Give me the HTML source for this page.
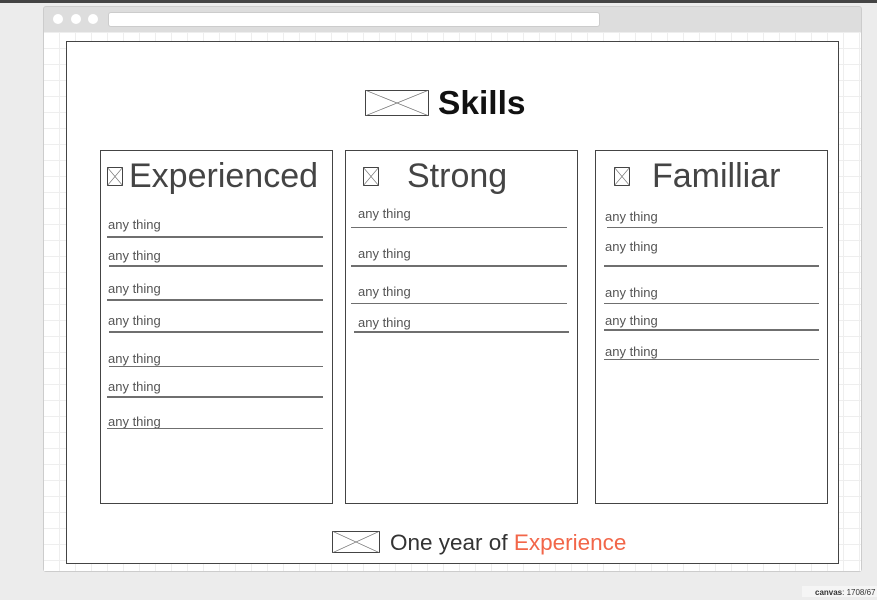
<!DOCTYPE html>
<html><head><style>
*{margin:0;padding:0;box-sizing:border-box}
body{width:877px;height:597px;background:#ececec;position:relative;overflow:hidden;font-family:"Liberation Sans",sans-serif}
.a{position:absolute}
.t{position:absolute;font-size:13px;color:#555;line-height:16px;white-space:nowrap;margin-top:1px}
.l{position:absolute;background:#6f6f6f}
.box{position:absolute;border:1px solid #444;background:#fff}
.h{position:absolute;font-size:34px;color:#444;line-height:40px;white-space:nowrap}
</style></head><body>
<div class="a" style="left:0;top:0;width:877px;height:3px;background:#444"></div>
<div class="a" style="left:43px;top:6px;width:819px;height:566px;background:#ddd;border:1px solid #ccc;border-radius:3px"></div>
<div class="a" style="left:53px;top:14px;width:10px;height:10px;border-radius:50%;background:#fff"></div>
<div class="a" style="left:71px;top:14px;width:10px;height:10px;border-radius:50%;background:#fff"></div>
<div class="a" style="left:88px;top:14px;width:10px;height:10px;border-radius:50%;background:#fff"></div>
<div class="a" style="left:108px;top:12px;width:492px;height:15px;border-radius:3px;background:#fff;border:1px solid #ccc"></div>
<div class="a" style="left:44px;top:32px;width:817px;height:539px;background-color:#fff;background-image:linear-gradient(#eee 1px,transparent 1px),linear-gradient(90deg,#eee 1px,transparent 1px);background-size:16px 16px;background-position:-1px 0"></div>
<div class="box" style="left:66px;top:41px;width:773px;height:523px"></div>
<svg class="a" style="left:365px;top:90px" width="64" height="26"><rect x=".5" y=".5" width="63" height="25" fill="#fff" stroke="#444"/><path d="M0 0L64 26M64 0L0 26" stroke="#666" stroke-width=".6"/></svg>
<div class="a" style="left:438px;top:84px;font-size:33.5px;font-weight:bold;color:#111;line-height:40px">Skills</div>
<div class="box" style="left:100px;top:150px;width:233px;height:354px"></div>
<div class="box" style="left:345px;top:150px;width:233px;height:354px"></div>
<div class="box" style="left:595px;top:150px;width:233px;height:354px"></div>
<svg class="a" style="left:107px;top:167px" width="16" height="19"><rect x=".5" y=".5" width="15" height="18" fill="#fff" stroke="#444"/><path d="M0 0L16 19M16 0L0 19" stroke="#666" stroke-width=".6"/></svg>
<svg class="a" style="left:363px;top:167px" width="16" height="19"><rect x=".5" y=".5" width="15" height="18" fill="#fff" stroke="#444"/><path d="M0 0L16 19M16 0L0 19" stroke="#666" stroke-width=".6"/></svg>
<svg class="a" style="left:614px;top:167px" width="16" height="19"><rect x=".5" y=".5" width="15" height="18" fill="#fff" stroke="#444"/><path d="M0 0L16 19M16 0L0 19" stroke="#666" stroke-width=".6"/></svg>
<div class="h" style="left:129px;top:156px">Experienced</div>
<div class="h" style="left:407px;top:156px">Strong</div>
<div class="h" style="left:652px;top:156px">Familliar</div>

<div class="t" style="left:108px;top:216px">any thing</div><div class="l" style="left:107px;top:236px;width:216px;height:2px"></div>
<div class="t" style="left:108px;top:247px">any thing</div><div class="l" style="left:109px;top:265px;width:214px;height:2px"></div>
<div class="t" style="left:108px;top:280px">any thing</div><div class="l" style="left:107px;top:299px;width:216px;height:2px"></div>
<div class="t" style="left:108px;top:312px">any thing</div><div class="l" style="left:109px;top:331px;width:214px;height:2px"></div>
<div class="t" style="left:108px;top:350px">any thing</div><div class="l" style="left:109px;top:366px;width:214px;height:1px"></div>
<div class="t" style="left:108px;top:378px">any thing</div><div class="l" style="left:107px;top:396px;width:216px;height:2px"></div>
<div class="t" style="left:108px;top:413px">any thing</div><div class="l" style="left:107px;top:428px;width:216px;height:1px"></div>

<div class="t" style="left:358px;top:205px">any thing</div><div class="l" style="left:351px;top:227px;width:216px;height:1px"></div>
<div class="t" style="left:358px;top:245px">any thing</div><div class="l" style="left:351px;top:265px;width:216px;height:2px"></div>
<div class="t" style="left:358px;top:283px">any thing</div><div class="l" style="left:351px;top:303px;width:216px;height:1px"></div>
<div class="t" style="left:358px;top:314px">any thing</div><div class="l" style="left:354px;top:331px;width:215px;height:2px"></div>

<div class="t" style="left:605px;top:208px">any thing</div><div class="l" style="left:607px;top:227px;width:216px;height:1px"></div>
<div class="t" style="left:605px;top:238px">any thing</div><div class="l" style="left:604px;top:265px;width:215px;height:2px"></div>
<div class="t" style="left:605px;top:284px">any thing</div><div class="l" style="left:604px;top:303px;width:215px;height:1px"></div>
<div class="t" style="left:605px;top:312px">any thing</div><div class="l" style="left:604px;top:329px;width:215px;height:2px"></div>
<div class="t" style="left:605px;top:343px">any thing</div><div class="l" style="left:604px;top:359px;width:215px;height:1px"></div>

<svg class="a" style="left:332px;top:531px" width="48" height="22"><rect x=".5" y=".5" width="47" height="21" fill="#fff" stroke="#444"/><path d="M0 0L48 22M48 0L0 22" stroke="#666" stroke-width=".6"/></svg>
<div class="a" style="left:390px;top:530px;font-size:22.5px;color:#333;line-height:25px;white-space:nowrap">One year of <span style="color:#f26649">Experience</span></div>
<div class="a" style="left:802px;top:586px;width:75px;height:11px;background:#f5f5f5;font-size:8px;color:#333;padding-left:13px;line-height:14px;white-space:nowrap"><b>canvas</b>: 1708/67</div>
</body></html>
